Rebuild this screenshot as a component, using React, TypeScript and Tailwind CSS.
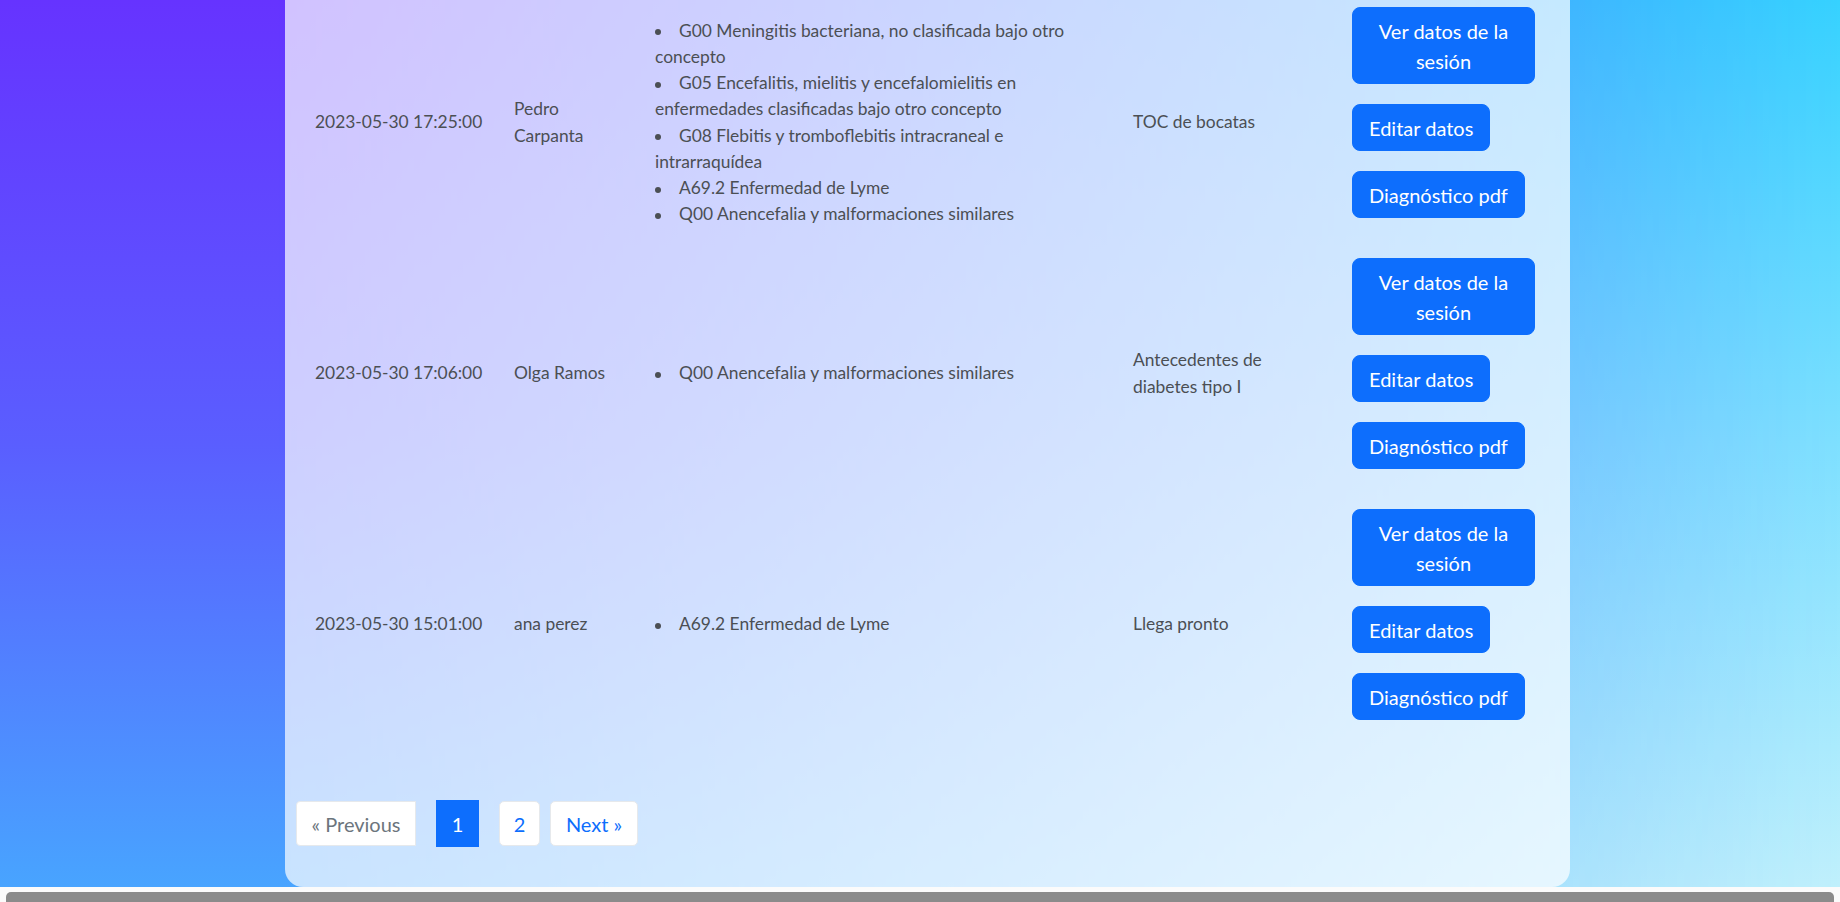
type Row = {
  date: string;
  name: string[];
  diag: string[][];
  notes: string[];
};

const rows: Row[] = [
  {
    date: "2023-05-30 17:25:00",
    name: ["Pedro", "Carpanta"],
    diag: [
      ["G00 Meningitis bacteriana, no clasificada bajo otro", "concepto"],
      ["G05 Encefalitis, mielitis y encefalomielitis en", "enfermedades clasificadas bajo otro concepto"],
      ["G08 Flebitis y tromboflebitis intracraneal e", "intrarraquídea"],
      ["A69.2 Enfermedad de Lyme"],
      ["Q00 Anencefalia y malformaciones similares"],
    ],
    notes: ["TOC de bocatas"],
  },
  {
    date: "2023-05-30 17:06:00",
    name: ["Olga Ramos"],
    diag: [["Q00 Anencefalia y malformaciones similares"]],
    notes: ["Antecedentes de", "diabetes tipo I"],
  },
  {
    date: "2023-05-30 15:01:00",
    name: ["ana perez"],
    diag: [["A69.2 Enfermedad de Lyme"]],
    notes: ["Llega pronto"],
  },
];

const Lines = ({ lines }: { lines: string[] }) => (
  <>
    {lines.map((l, i) => (
      <span key={i} className="block whitespace-nowrap">
        {l}
      </span>
    ))}
  </>
);

const btn =
  "rounded-lg border border-[#0d6efd] bg-[#0d6efd] px-4 py-[7.5px] text-[20px] leading-[30px] text-white";

const SessionRow = ({ row }: { row: Row }) => (
  <div className="grid grid-cols-[199px_141px_478px_219px_1fr] items-center py-[10px]">
    <div className="whitespace-nowrap">{row.date}</div>
    <div>
      <Lines lines={row.name} />
    </div>
    <ul>
      {row.diag.map((d, i) => (
        <li key={i} className="whitespace-nowrap">
          <span className="inline-block w-[24px]">
            <span className="inline-block h-[6px] w-[6px] rounded-full bg-[#4b4f54] align-middle" />
          </span>
          {d.map((seg, j) => (
            <span key={j}>
              {j > 0 && <br />}
              {seg}
            </span>
          ))}
        </li>
      ))}
    </ul>
    <div>
      <Lines lines={row.notes} />
    </div>
    <div className="flex flex-col items-start gap-5 pb-5">
      <button className={`${btn} w-[183px] text-center`}>
        Ver datos de la
        <br />
        sesión
      </button>
      <button className={btn}>Editar datos</button>
      <button className={btn}>Diagnóstico pdf</button>
    </div>
  </div>
);

export default function App() {
  return (
    <div className="flex h-[902px] w-full flex-col overflow-hidden font-['Lato','Noto_Sans',sans-serif]">
      <main className="relative flex min-h-0 flex-1 flex-col justify-end overflow-hidden bg-[linear-gradient(to_bottom,#6633ff,#5a5eff_50%,#48a4ff)]">
        {/* right-hand colours of the page gradient, faded in towards the right */}
        <div className="absolute inset-0 bg-[linear-gradient(to_bottom,#36d2ff,#7ee0ff_50%,#c0f0fc)] [mask-image:linear-gradient(to_right,transparent_15%,black)]" />
        <section className="relative mx-[285px] w-[1285px] shrink-0 rounded-b-[18px] bg-white/70 px-[11px] pb-[40px]">
          <div className="pl-[19px] text-[17.4px] leading-[26.2px] text-[#4b4f54]">
            {rows.map((r, i) => (
              <SessionRow key={i} row={r} />
            ))}
          </div>
          <nav className="mt-[50px] flex items-center text-[20px] leading-[30px]">
            <span className="flex h-[45px] w-[120px] items-center justify-center rounded-l-[4px] border border-[#e6e9ec] bg-white text-[#6c757d]">
              « Previous
            </span>
            <span className="ml-5 flex h-[47px] w-[43px] items-center justify-center bg-[#0d6efd] text-white">
              1
            </span>
            <span className="ml-5 flex h-[45px] w-[41px] items-center justify-center rounded-[5px] border border-[#e6e9ec] bg-white text-[#0d6efd]">
              2
            </span>
            <span className="ml-[10px] flex h-[45px] w-[88px] items-center justify-center rounded-[5px] border border-[#e6e9ec] bg-white text-[#0d6efd]">
              Next »
            </span>
          </nav>
        </section>
      </main>
      <div className="h-[15px] shrink-0 bg-[#fbfbfb] px-[6px] pt-[5px]">
        <div className="h-full rounded-t-[5px] bg-[#8b8b8b]" />
      </div>
    </div>
  );
}
